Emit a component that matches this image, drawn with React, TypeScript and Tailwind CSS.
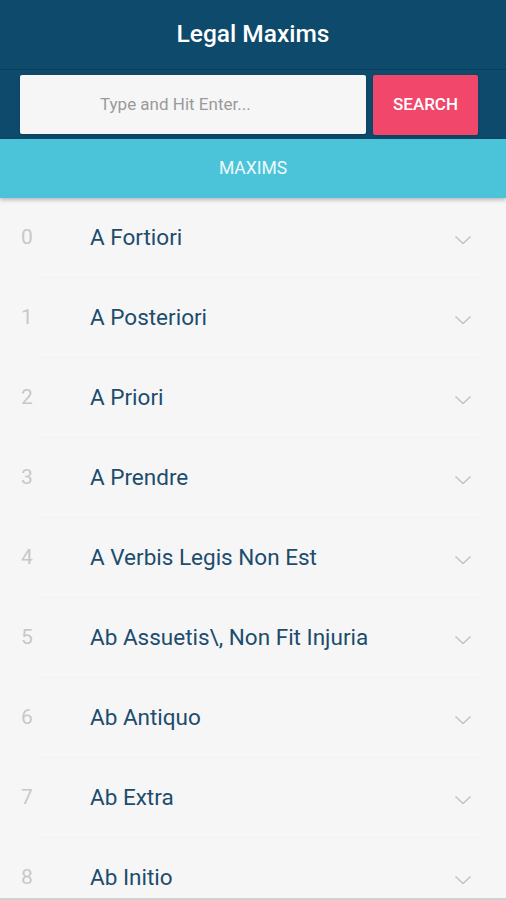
import React from "react";

const maxims = [
    "A Fortiori",
    "A Posteriori",
    "A Priori",
    "A Prendre",
    "A Verbis Legis Non Est",
    "Ab Assuetis\\, Non Fit Injuria",
    "Ab Antiquo",
    "Ab Extra",
    "Ab Initio",
];

function Chevron() {
    return (
        <svg width="18" height="10" viewBox="0 0 18 10" fill="none">
            <path d="M1.5 1.5 L9 8.5 L16.5 1.5" stroke="#c4c4c4" strokeWidth="1.6" />
        </svg>
    );
}

export default function App() {
    return (
        <div className="w-[506px] h-[900px] overflow-hidden bg-[#f6f6f7] font-['Roboto',sans-serif] flex flex-col">
            {/* header */}
            <div className="h-[70px] shrink-0 bg-[#0d4a6b] border-b border-[#0a3f5c] flex items-center justify-center">
                <h1 className="text-white text-[24.5px] font-medium">Legal Maxims</h1>
            </div>
            {/* search */}
            <div className="shrink-0 bg-[#0d4a6b] flex gap-[7px] pl-[20px] pr-[28px] pt-[5px] pb-[4px]">
                <div className="w-[346px] h-[59px] bg-[#f6f6f7] rounded-[2px] flex items-center pl-[80px] shadow-sm">
                    <span className="text-[#9a9a9a] text-[17px]">Type and Hit Enter...</span>
                </div>
                <button className="w-[105px] h-[60px] bg-[#f0476a] rounded-[2px] text-white text-[17px] font-medium shadow-sm">
                    SEARCH
                </button>
            </div>
            {/* tab */}
            <div className="h-[59px] shrink-0 bg-[#4bc3d9] flex items-center justify-center shadow-[0_2px_4px_rgba(0,0,0,0.25)] z-10">
                <span className="text-white/90 text-[17.5px]">MAXIMS</span>
            </div>
            {/* list */}
            <div className="flex-1 min-h-0 overflow-hidden flex flex-col">
                {maxims.map((m, i) => (
                    <div key={i} className="h-[80px] flex items-center shrink-0 border-b border-[#f2f2f3] ml-[40px] mr-[24px] relative">
                        <span className="absolute left-[-19px] text-[21px] text-[#c8c8c8]">{i}</span>
                        <span className="ml-[50px] text-[22.5px] text-[#1d4c6c]">{m}</span>
                        <span className="ml-auto mr-[10px] mt-[4px]">
                            <Chevron />
                        </span>
                    </div>
                ))}
            </div>
            <div className="h-[2px] shrink-0 bg-[#d0d0d0]" />
        </div>
    );
}
